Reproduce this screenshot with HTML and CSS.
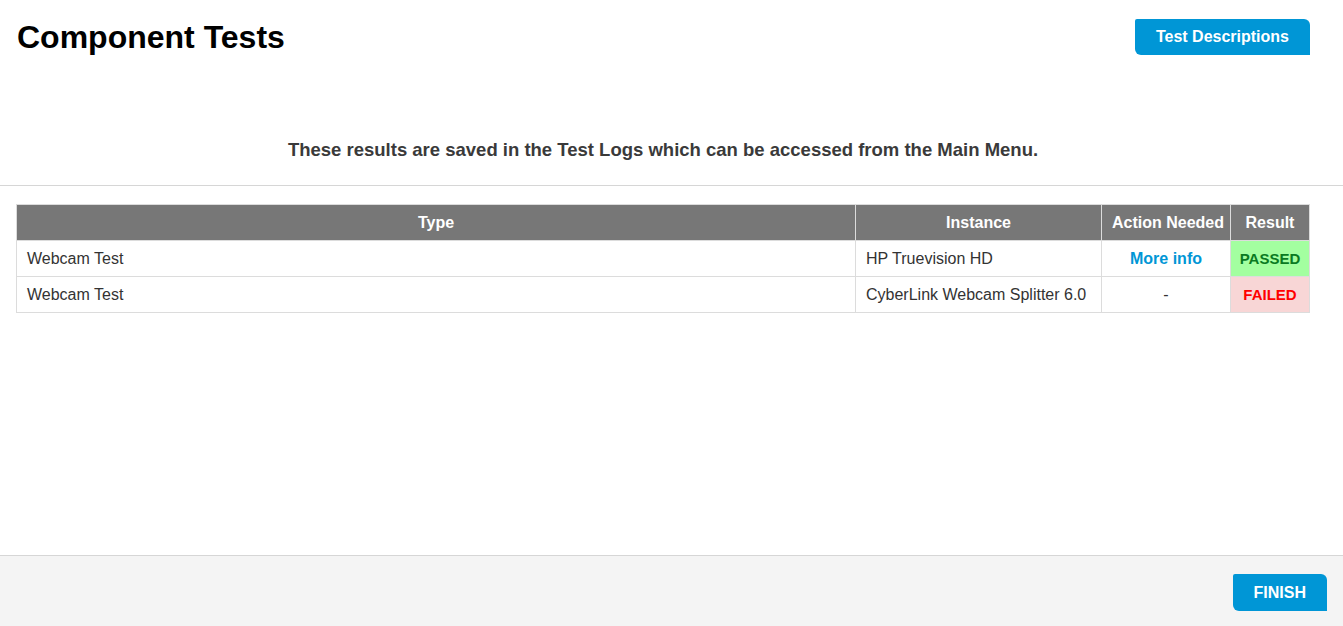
FILE: index.html
```html
<!DOCTYPE HTML>
<html>
<head>
<meta http-equiv="Content-Type" content="text/html; charset=utf-8">
<title>Component Tests</title>
<link rel="stylesheet" href="styles.css">
</head>
<body>
<div id="page">
	<div class="head">
		<h1>Component Tests</h1>
		<a class="btn" href="#">Test Descriptions</a>
	</div>
	<p class="intro">These results are saved in the Test Logs which can be accessed from the Main Menu.</p>
	<div class="main">
		<table class="results">
			<colgroup>
				<col class="c-type">
				<col class="c-inst">
				<col class="c-act">
				<col class="c-res">
			</colgroup>
			<tr>
				<th>Type</th>
				<th>Instance</th>
				<th>Action Needed</th>
				<th>Result</th>
			</tr>
			<tr>
				<td>Webcam Test</td>
				<td>HP Truevision HD</td>
				<td class="act"><a href="#">More info</a></td>
				<td class="res pass">PASSED</td>
			</tr>
			<tr>
				<td>Webcam Test</td>
				<td>CyberLink Webcam Splitter 6.0</td>
				<td class="act none">-</td>
				<td class="res fail">FAILED</td>
			</tr>
		</table>
	</div>
	<div class="foot">
		<a class="btn" href="#">FINISH</a>
	</div>
</div>
</body>
</html>
```

FILE: styles.css
```css
html,body{ margin:0;padding:0;height:100%;}
body{ background:#fff; color:#3a3a3a; font-family:"Liberation Sans",Arial,sans-serif; font-size:16px;}
h1,p{ margin:0;}
a{ text-decoration:none;}

#page{ height:100%; display:flex; flex-direction:column;}

.head{ display:flex; align-items:center; justify-content:space-between; padding:15px 33px 0 17px;}
.head h1{ font-size:32px; line-height:44px; font-weight:bold; color:#000;}

.btn{ display:block; height:36px; line-height:36px; padding:0 21px; background:#0096d6; color:#fff; border-radius:2px 6px 0 6px; font-size:16px; font-weight:bold;}

.intro{ padding:76px 33px 20px 16px; border-bottom:1px solid #d6d6d6; text-align:center; font-size:18.5px; line-height:30px; font-weight:bold; color:#3a3a3a;}

.main{ flex:1; padding:18px 33px 0 16px;}
.results{ width:100%; table-layout:fixed; border-collapse:collapse; border:1px solid #dcdcdc;}
.c-type{ width:839px;}
.c-inst{ width:246px;}
.c-act{ width:129px;}
.results th,.results td{ border:1px solid #dcdcdc; padding:0 10px; height:35px; line-height:35px; white-space:nowrap; overflow:hidden;}
.results th{ background:#777; color:#fff; text-align:center; font-size:16px; font-weight:bold;}
.results td{ color:#333; text-align:left;}
.results td.act{ text-align:center; font-weight:bold; font-size:16px;}
.results td.none{ font-weight:normal;}
.act a{ color:#0096d6;}
.results td.res{ text-align:center; padding:0 4px; font-size:15px; font-weight:bold;}
.results td.pass{ background:#a3ffa0; color:#0a7a22;}
.results td.fail{ background:#f8d6d6; color:#f00;}

.foot{ height:71px; background:#f4f4f4; border-top:1px solid #d6d6d6; display:flex; justify-content:flex-end; align-items:flex-start; padding:18px 16px 0 0; box-sizing:border-box;}
.foot .btn{ height:37px; line-height:37px;}
```
